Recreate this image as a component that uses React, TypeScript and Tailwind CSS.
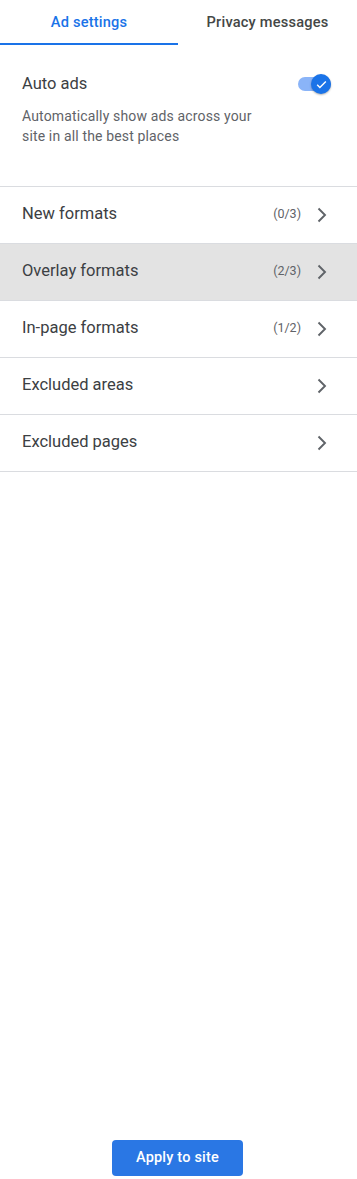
import React, { useState } from 'react';

const ROWS = [
  { label: 'New formats', count: '(0/3)' },
  { label: 'Overlay formats', count: '(2/3)', active: true },
  { label: 'In-page formats', count: '(1/2)' },
  { label: 'Excluded areas' },
  { label: 'Excluded pages' },
];

function Chevron() {
  return (
    <svg width="10" height="16" viewBox="0 0 10 16" className="text-[#5f6368]">
      <polyline points="1.5,1.5 8,8 1.5,14.5" fill="none" stroke="currentColor" strokeWidth="1.9" />
    </svg>
  );
}

export default function App() {
  const [tab, setTab] = useState<'ads' | 'privacy'>('ads');
  const [enabled, setEnabled] = useState(true);

  return (
    <div className="w-[357px] h-[1179px] bg-white flex flex-col font-['Roboto',sans-serif]">
      {/* Tabs */}
      <div className="flex h-[46px]">
        <button
          onClick={() => setTab('ads')}
          className={`w-[178px] h-full text-[14.6px] font-medium tracking-[0.2px] relative ${
            tab === 'ads' ? 'text-[#1a73e8]' : 'text-[#444746]'
          }`}
        >
          Ad settings
          {tab === 'ads' && <span className="absolute left-0 right-0 bottom-[1px] h-[2px] bg-[#1a73e8]" />}
        </button>
        <button
          onClick={() => setTab('privacy')}
          className={`flex-1 h-full text-[14.6px] font-medium tracking-[0.2px] relative ${
            tab === 'privacy' ? 'text-[#1a73e8]' : 'text-[#444746]'
          }`}
        >
          Privacy messages
          {tab === 'privacy' && <span className="absolute left-0 right-0 bottom-[1px] h-[2px] bg-[#1a73e8]" />}
        </button>
      </div>

      {/* Auto ads */}
      <div className="px-[22px] pt-[26px] pb-[40px] border-b border-[#dadce0]">
        <div className="flex items-center justify-between">
          <span className="text-[16.5px] text-[#3c4043]">Auto ads</span>
          <button
            onClick={() => setEnabled(!enabled)}
            className="relative w-[38px] h-[24px] mr-[2px] flex items-center"
          >
            <span
              className={`absolute left-[3px] w-[33px] h-[14px] rounded-full ${
                enabled ? 'bg-[#8ab4f8]' : 'bg-[#bdc1c6]'
              }`}
            />
            <span
              className={`absolute top-[2px] w-[20px] h-[20px] rounded-full shadow-[0_1px_2px_rgba(0,0,0,0.3)] flex items-center justify-center ${
                enabled ? 'left-[16px] bg-[#1a73e8]' : 'left-0 bg-white'
              }`}
            >
              {enabled && (
                <svg width="13" height="13" viewBox="0 0 24 24">
                  <path d="M4 12.5l5 5L20 6.5" stroke="white" strokeWidth="2.6" fill="none" />
                </svg>
              )}
            </span>
          </button>
        </div>
        <p className="mt-[9px] text-[14px] leading-[20px] text-[#5f6368] tracking-[0.15px]">
          Automatically show ads across your
          <br />
          site in all the best places
        </p>
      </div>

      {/* Rows */}
      <div>
        {ROWS.map((row) => (
          <div
            key={row.label}
            className={`h-[57px] pl-[22px] pr-[30px] flex items-center justify-between border-b border-[#dadce0] ${
              row.active ? 'bg-[#e3e3e3]' : 'bg-white'
            }`}
          >
            <span className="text-[16.5px] text-[#3c4043]">{row.label}</span>
            <div className="flex items-center gap-[16px]">
              {row.count && <span className="text-[12.5px] text-[#5f6368]">{row.count}</span>}
              <Chevron />
            </div>
          </div>
        ))}
      </div>

      <div className="flex-1" />

      {/* Footer */}
      <div className="flex justify-center pb-[3px] pr-[2px]">
        <button className="w-[131px] h-[36px] rounded-[4px] bg-[#2a77e4] text-white text-[14.5px] font-medium tracking-[0.2px]">
          Apply to site
        </button>
      </div>
    </div>
  );
}
